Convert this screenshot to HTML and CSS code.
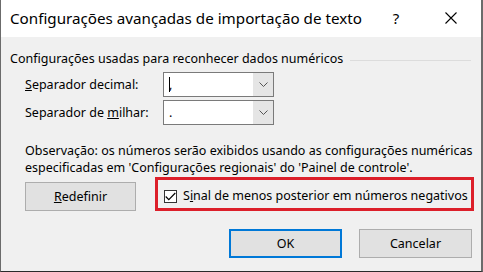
FILE: index.html
```html
<!DOCTYPE html>
<html>
<head>
<meta charset="utf-8">
<link rel="stylesheet" href="styles.css">
</head>
<body>
<div class="window">
  <div class="titlebar">
    <span class="title">Configurações avançadas de importação de texto</span>
    <span class="help">?</span>
    <span class="close"><svg width="12" height="12" viewBox="0 0 12 12"><path d="M0.5 0.5 L11.5 11.5 M11.5 0.5 L0.5 11.5" stroke="#000" stroke-width="1.1" fill="none"/></svg></span>
  </div>
  <div class="content">
    <div class="group-label"><span>Configurações usadas para reconhecer dados numéricos</span><span class="group-line"></span></div>
    <div class="field-row">
      <span class="field-label"><u>S</u>eparador decimal:</span>
      <div class="combo">
        <div class="combo-value"><span class="caret"></span>,</div>
        <div class="combo-btn"><svg width="9" height="5" viewBox="0 0 9 5"><path d="M0.5 0.5 L4.5 4.5 L8.5 0.5" stroke="#555" stroke-width="1" fill="none"/></svg></div>
      </div>
    </div>
    <div class="field-row">
      <span class="field-label">Separador de <u>m</u>ilhar:</span>
      <div class="combo">
        <div class="combo-value">.</div>
        <div class="combo-btn"><svg width="9" height="5" viewBox="0 0 9 5"><path d="M0.5 0.5 L4.5 4.5 L8.5 0.5" stroke="#555" stroke-width="1" fill="none"/></svg></div>
      </div>
    </div>
    <p class="note">Observação: os números serão exibidos usando as configurações numéricas especificadas em 'Configurações regionais' do 'Painel de controle'.</p>
    <div class="action-row">
      <button class="btn btn-reset"><u>R</u>edefinir</button>
      <div class="highlight">
        <span class="checkbox"><svg width="11" height="9" viewBox="0 0 11 9"><path d="M0.7 4.5 L3.8 7.6 L10.3 1" stroke="#000" stroke-width="1.2" fill="none"/></svg></span>
        <span class="check-label">S<u>i</u>nal de menos posterior em números negativos</span>
      </div>
    </div>
    <div class="footer">
      <button class="btn btn-ok">OK</button>
      <button class="btn btn-cancel">Cancelar</button>
    </div>
  </div>
</div>
</body>
</html>
```
FILE: styles.css
```css
* { box-sizing: border-box; }
html, body { margin: 0; padding: 0; }
body {
  width: 483px;
  height: 272px;
  overflow: hidden;
  font-family: "Noto Sans", "Open Sans", sans-serif;
  color: #000;
}
.window {
  width: 483px;
  height: 272px;
  border-left: 1px solid #6b6b6b;
  border-right: 2px solid #6b6b6b;
  border-bottom: 1px solid #2b2b2b;
  background: #f0f0f0;
  display: flex;
  flex-direction: column;
}
.titlebar {
  height: 37px;
  background: #fff;
  display: flex;
  align-items: center;
  padding-left: 9px;
  flex: none;
}
.title {
  font-size: 15.2px;
  flex: 1;
  padding-bottom: 2px;
}
.help {
  font-size: 15px;
  width: 20px;
  margin-right: 39px;
  text-align: center;
  padding-bottom: 2px;
}
.close {
  width: 12px;
  margin-right: 24px;
  display: flex;
  align-items: center;
  padding-bottom: 2px;
}
.content {
  flex: 1;
  padding: 12px 0 0 9px;
  font-size: 12.5px;
  line-height: 16px;
}
.group-label {
  height: 20px;
  display: flex;
  align-items: center;
  padding-right: 10px;
  margin-top: 0;
}
.group-line {
  flex: 1;
  height: 1px;
  background: #dcdcdc;
  margin-left: 7px;
  margin-top: 2px;
}
.field-row {
  display: flex;
  align-items: center;
  margin-left: 15px;
  height: 25px;
  margin-top: 3px;
  margin-bottom: 3px;
}
.field-label {
  width: 138px;
}
.combo {
  width: 111px;
  height: 25px;
  border: 1px solid #7a7a7a;
  background: #fff;
  display: flex;
}
.combo-value {
  flex: 1;
  padding-left: 5px;
  display: flex;
  align-items: center;
  line-height: 16px;
}
.caret {
  display: inline-block;
  width: 1px;
  height: 15px;
  background: #000;
  margin-right: -1px;
}
.combo-btn {
  width: 20px;
  background: #e5e5e5;
  display: flex;
  align-items: center;
  justify-content: center;
}
.note {
  margin: 17px 0 0 15px;
  line-height: 17px;
}
.action-row {
  display: flex;
  align-items: center;
  margin-left: 15px;
  margin-top: 1px;
  height: 34px;
}
.btn {
  font-family: inherit;
  font-size: 12.5px;
  background: #e1e1e1;
  border: 1px solid #adadad;
  color: #000;
  padding: 0;
  margin: 0;
}
.btn-reset {
  width: 111px;
  height: 29px;
  margin-top: 5px;
}
.highlight {
  margin-left: 19px;
  width: 319px;
  height: 34px;
  border: 3px solid #dc1f2a;
  display: flex;
  align-items: center;
  padding-left: 6px;
}
.checkbox {
  width: 13px;
  height: 13px;
  border: 1px solid #333;
  background: #fff;
  display: flex;
  align-items: center;
  justify-content: center;
  margin-right: 6px;
  margin-top: 4px;
}
.check-label {
  margin-top: 4px;
}
.footer {
  display: flex;
  justify-content: flex-end;
  gap: 17px;
  margin-top: 18px;
  padding-right: 9px;
}
.btn-ok, .btn-cancel {
  width: 113px;
  height: 29px;
}
.btn-ok {
  border: 2px solid #0078d7;
}
```
